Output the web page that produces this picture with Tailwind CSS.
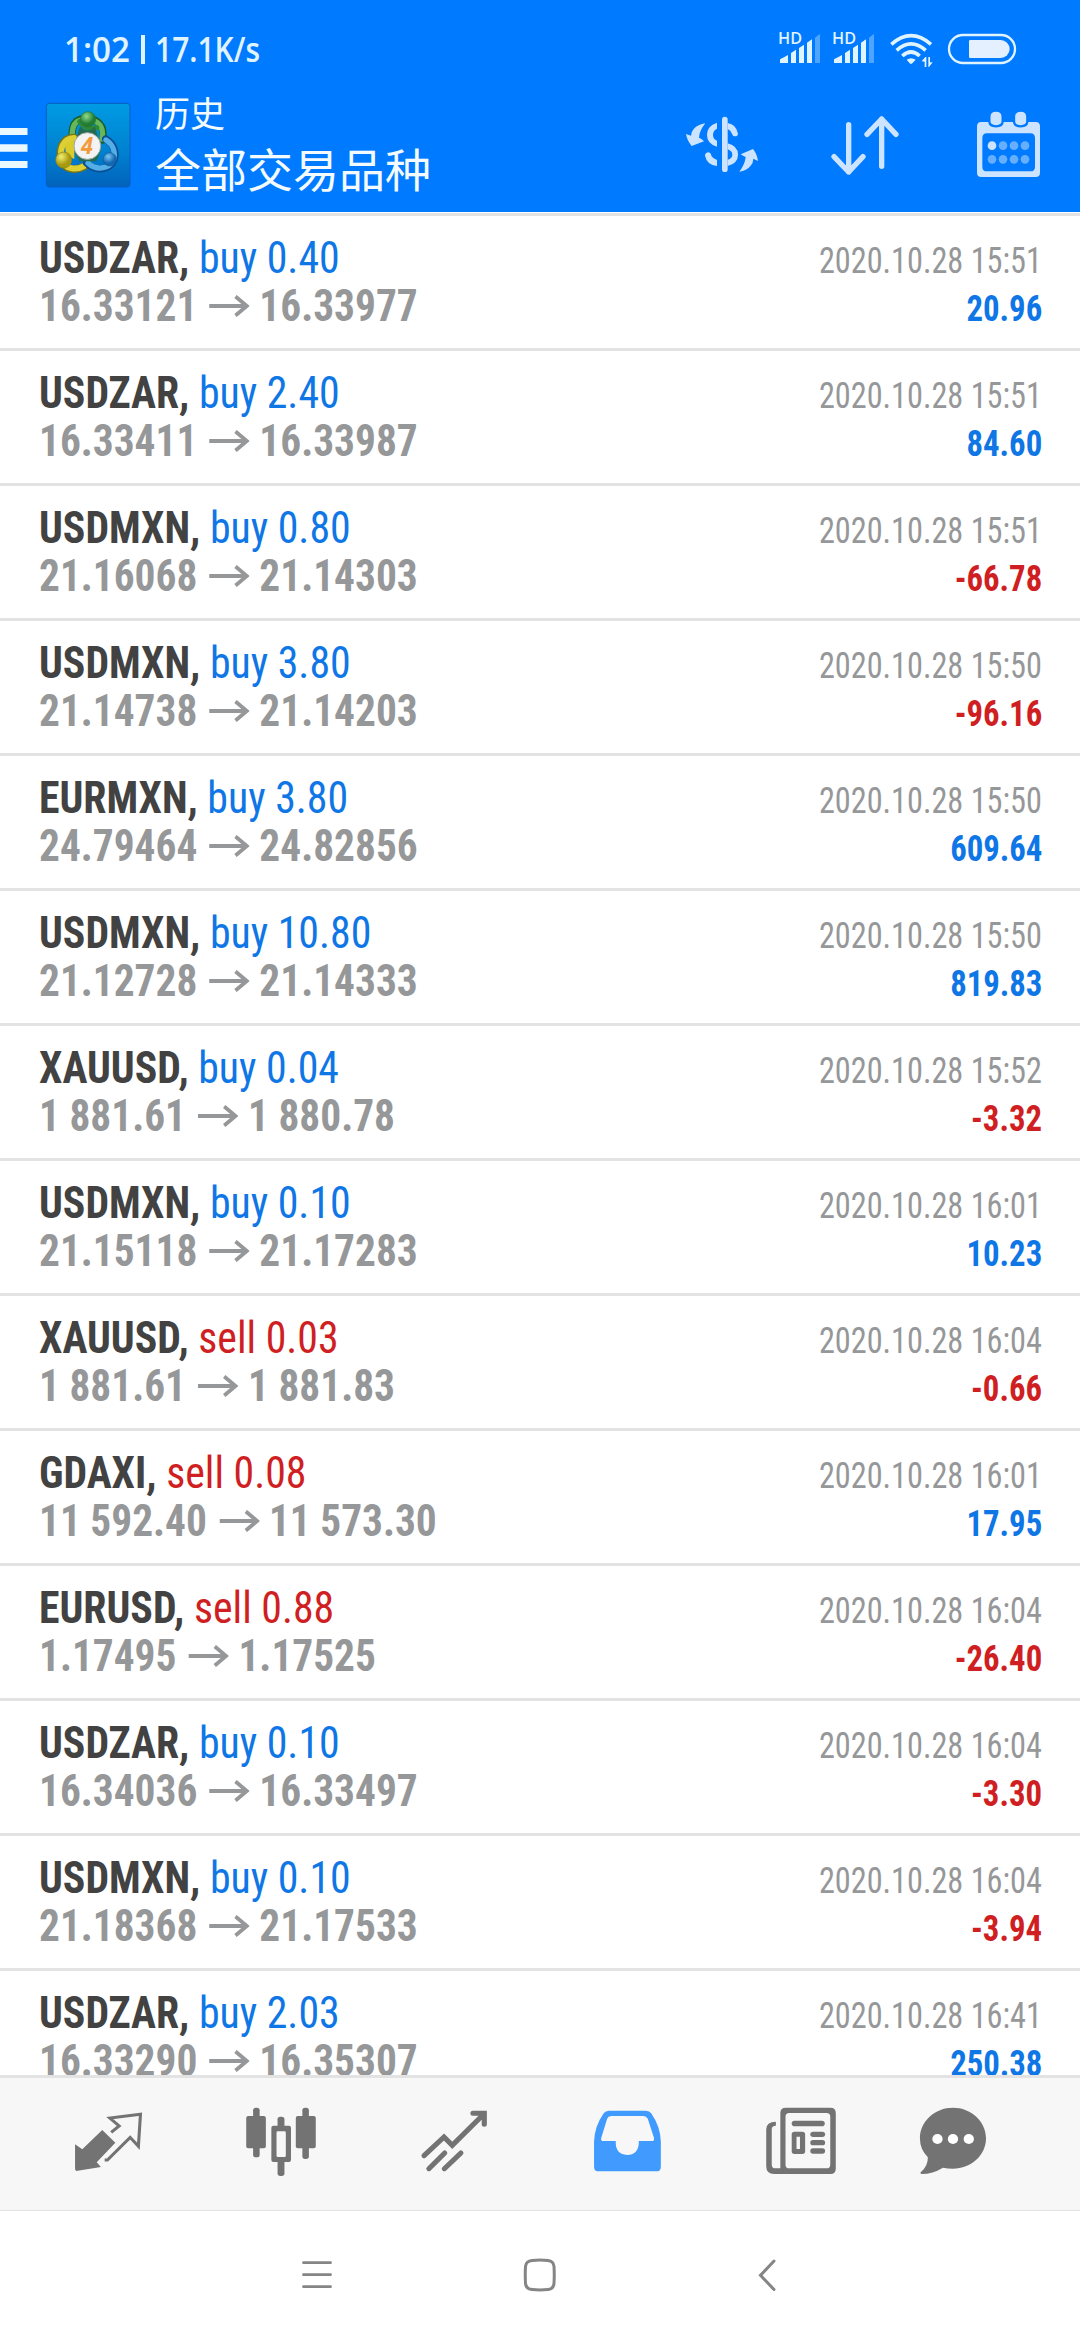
<!DOCTYPE html>
<html lang="zh-CN">
<head>
<meta charset="utf-8">
<title>历史</title>
<script src="https://cdn.jsdelivr.net/npm/@tailwindcss/browser@4"></script>
</head>
<body class="flex h-[2340px] w-[1080px] flex-col overflow-hidden bg-white font-['Roboto_Condensed','Roboto','Noto_Sans_CJK_SC',sans-serif]">

<header class="flex h-[212px] shrink-0 flex-col bg-[#007aff]">
  <!-- Status bar -->
  <div class="flex h-[78px] items-start justify-between pt-[30px] pr-[63px] pl-[64px]">
    <svg class="h-10 w-[200px] overflow-visible" viewBox="0 0 200 40" fill="#e0f4ff" font-family="Open Sans, sans-serif" font-size="34">
      <text x="0" y="31.700" font-weight="600" textLength="66" lengthAdjust="spacingAndGlyphs">1:02</text>
      <rect x="77" y="5" width="4" height="29"/>
      <text x="91" y="31.700" font-weight="600" textLength="105" lengthAdjust="spacingAndGlyphs">17.1K/s</text>
    </svg>
    <svg class="h-10 w-60 overflow-visible" viewBox="351 90 720 120" fill="#e0f4ff">
      <g id="signal">
        <text x="354" y="132" font-family="Open Sans, sans-serif" font-weight="600" font-size="46" textLength="72" lengthAdjust="spacingAndGlyphs">HD</text>
        <path d="M360 189v-11q12-6 24-13v24zM393 189v-30l15-10v40zM417 189v-45l15-10v55zM441 189v-61l15-10v71z"/>
        <path d="M465 189v-76l15-12v88z" opacity=".35"/>
      </g>
      <use href="#signal" x="162"/>
      <g fill="none" stroke="#e0f4ff" stroke-width="11">
        <path d="M694 133Q753 81 813 133"/><path d="M710 151Q753 112 797 151"/><path d="M727 168Q753 144 779 168"/>
      </g>
      <path d="M740 179Q753 170 767 179L757 190Q753 193 749 190zM785 184l11-13h3v30h-5v-16zM805 171h5v16h8l-11 14h-2z"/>
      <rect x="867" y="105" width="198" height="84" rx="42" fill="none" stroke="#e0f4ff" stroke-width="7"/>
      <path d="M931 120h91a27 27 0 0 1 0 54h-91q-4 0-4-4v-46q0-4 4-4z" fill="#e4f0ff"/>
    </svg>
  </div>
  <!-- App bar -->
  <div class="flex h-[134px] items-center pr-[30px]">
    <svg class="mt-[6px] h-10 w-7" viewBox="0 0 28 40" fill="#eaf8ff"><path d="M0 0h27.500v7H0zM0 16.300h27.500v7.500H0zM0 33h27.500v7H0z"/></svg>
    <svg class="ml-[17px] size-[86px]" viewBox="45 39 258 258">
      <defs>
        <linearGradient id="bg" x2="0" y2="1"><stop stop-color="#009be3"/><stop offset=".6" stop-color="#0080cf"/><stop offset="1" stop-color="#0262bb"/></linearGradient>
        <radialGradient id="gr" cx=".4" cy=".3"><stop stop-color="#8fdc8c"/><stop offset="1" stop-color="#207c35"/></radialGradient>
        <radialGradient id="ye" cx=".35" cy=".3"><stop stop-color="#f3ef73"/><stop offset="1" stop-color="#a89a10"/></radialGradient>
        <radialGradient id="bl" cx=".4" cy=".3"><stop stop-color="#7cc8f5"/><stop offset="1" stop-color="#1167b0"/></radialGradient>
      </defs>
      <rect x="49" y="43" width="251" height="251" rx="9" fill="url(#bg)" stroke="#075dc0" stroke-width="3"/>
      <g fill="none" stroke-linecap="round">
        <path d="M127 150C121 90 152 88 173 89C195 89 228 105 217 153" stroke="#185f27" stroke-width="22"/>
        <path d="M127 148C123 92 152 90 173 91C195 92 225 105 216 150" stroke="#66b75c" stroke-width="16"/>
        <path d="M150 98Q173 128 200 116" stroke="#2f8a35" stroke-width="16"/>
        <path d="M132 146C95 148 88 180 92 208C102 247 140 245 162 233" stroke="#7b7412" stroke-width="23"/>
        <path d="M132 147C97 150 90 180 94 208C104 243 140 243 160 232" stroke="#dcd034" stroke-width="18"/>
        <path d="M227 150C252 165 259 190 253 212C238 247 195 247 170 222" stroke="#0a4f94" stroke-width="22"/>
        <path d="M228 153C250 167 257 190 251 212C236 243 197 244 174 222" stroke="#55aee6" stroke-width="16"/>
      </g>
      <path d="M150 112q22 25 45 0l18 70-14 35h-50l-20-35z" fill="#246b50"/>
      <path d="M105 165l28-15v60l-25-10z" fill="#d9cb2b"/>
      <circle cx="174" cy="91" r="23" fill="url(#gr)" stroke="#2a7336" stroke-width="2"/>
      <circle cx="101" cy="213" r="24" fill="url(#ye)" stroke="#8b8117" stroke-width="2"/>
      <circle cx="239" cy="211" r="20" fill="url(#bl)" stroke="#165c9c" stroke-width="2"/>
      <circle cx="172" cy="171" r="40" fill="#f3f3f4" stroke="#a3aaa5" stroke-width="3"/>
      <text x="171" y="194" text-anchor="middle" font-family="Open Sans, sans-serif" font-style="italic" font-weight="700" font-size="68" textLength="36" lengthAdjust="spacingAndGlyphs" fill="#f39a3c">4</text>
    </svg>
    <div class="mt-[6px] ml-6 flex flex-1 flex-col text-[#f3fbff]">
      <span class="text-[35px] leading-[44px]">历史</span>
      <span class="mt-[2px] text-[46px] leading-[62px]">全部交易品种</span>
    </div>
    <div class="flex gap-[59px]">
      <svg class="size-[84px]" viewBox="60 309 252 252" fill="#cce4ff">
        <path d="M136 370Q114 373 101 387Q94 395 93 407L78 402Q81 421 95 438L132 424Q124 415 117 413Q118 392 136 370z"/>
        <path d="M238 515Q260 512 272 497Q280 488 280 476L294 483Q291 462 279 447L242 463Q249 468 257 471Q255 493 238 515z"/>
        <rect x="186" y="350" width="17" height="166" rx="8.500"/>
        <path d="M171 368v18q-12 5-12 19q0 13 12 17v18q-30-8-30-35t30-37zM203 369q26 4 31 32q-1 8-9 8q-7 0-9-8q-4-10-13-14zM203 430q31 8 31 34t-31 34v-19q14-4 14-15t-14-16zM144 457q8 0 10 10q5 9 17 13v18q-30-3-36-31q0-8 9-10z"/>
      </svg>
      <svg class="size-[84px]" viewBox="489 309 252 252" fill="none" stroke="#cce4ff" stroke-width="16" stroke-linecap="round" stroke-linejoin="round">
        <path d="M566 374V516M522 470L566 516L609 470M665 499V357M621 403L665 357L708 403"/>
      </svg>
      <svg class="size-[84px]" viewBox="918 309 252 252" fill="#cce4ff">
        <path fill-rule="evenodd" d="M964 366H1127q13 0 13 13V518q0 13-13 13H964q-13 0-13-13V379q0-13 13-13zM981 400q-14 0-14 14V500q0 14 14 14H1111q14 0 14-14V414q0-14-14-14z"/>
        <g stroke="#007aff" stroke-width="7"><path d="M988 350q0-18 20-18t20 18v14q0 15-20 15t-20-15zM1062 350q0-18 20-18t20 18v14q0 15-20 15t-20-15z"/></g>
        <circle cx="996" cy="437" r="13"/>
        <g fill="#66afff"><circle cx="1029" cy="437" r="13"/><circle cx="1062" cy="437" r="13"/><circle cx="1095" cy="437" r="13"/><circle cx="996" cy="478" r="13"/><circle cx="1029" cy="478" r="13"/><circle cx="1062" cy="478" r="13"/><circle cx="1095" cy="478" r="13"/></g>
      </svg>
    </div>
  </div>
</header>

<main id="deals" class="mt-px h-[1862px] shrink-0 overflow-hidden border-t-[3px] border-[#e3e3e3]"></main>

<!-- Tab bar -->
<nav class="flex h-[136px] shrink-0 items-start border-t-[3px] border-b border-[#e3e3e3] bg-[#f7f7f7] pt-[20px] pl-[67px] text-[#737373]">
  <svg class="size-[84px]" viewBox="194.6 114 244 252" preserveAspectRatio="none" fill="currentColor">
    <path d="M297 210L335 248L281 307L293 321L221 333Q218 330 218 325V253L239 268z"/>
    <path d="M323 217L346 198L319 174L408 163L402 259L378 232L312 300H304" fill="none" stroke="currentColor" stroke-width="9"/>
  </svg>
  <svg class="ml-[88px] size-[84px]" viewBox="694 114 244 252" preserveAspectRatio="none" fill="currentColor">
    <rect x="735" y="143" width="19" height="149" rx="8"/><rect x="715" y="168" width="57" height="97" rx="6"/>
    <rect x="878" y="143" width="19" height="154" rx="8"/><rect x="859" y="168" width="58" height="97" rx="6"/>
    <rect x="806" y="170" width="20" height="178" rx="8"/><rect x="788" y="197" width="57" height="109" rx="6"/>
    <rect x="803" y="214" width="27" height="77" rx="4" fill="#f7f7f7"/>
  </svg>
  <svg class="ml-[89px] size-[84px]" viewBox="1196 114 244 252" preserveAspectRatio="none" fill="none" stroke="currentColor" stroke-width="15" stroke-linecap="round">
    <path d="M1231 287L1289 231L1313 256L1404 163M1373 160H1406V193M1245 326L1291 279M1290 326L1338 279"/>
  </svg>
  <svg class="ml-[89px] size-[84px]" viewBox="130.700 114 244 252" preserveAspectRatio="none">
    <path d="M200 152H308Q318 152 323 160Q350 200 351 245V320Q351 334 338 334H170Q157 334 157 320V245Q158 200 185 160Q190 152 200 152z" fill="#419bff"/>
    <path d="M207 168H300Q309 168 313 176L331 233Q333 243 325 243H287V250Q285 285 253 285Q221 283 220 250V243H184Q175 243 178 233L195 176Q198 168 207 168z" fill="#f7f7f7"/>
  </svg>
  <svg class="ml-[90px] size-[84px]" viewBox="636 114 244 252" preserveAspectRatio="none" fill="currentColor">
    <path fill-rule="evenodd" d="M714 143H843q16 0 16 16V326q0 16-16 16H680q-23 0-23-23V208q0-23 28-23v12q-12 0-12 11V314q0 11 11 11h14V159q0-16 16-16zM724 159q-11 0-11 11V314q0 11 11 11H832q11 0 11-11V170q0-11-11-11z"/>
    <rect x="731" y="182" width="96" height="17" rx="8.500"/><rect x="785" y="215" width="43" height="16" rx="8"/><rect x="785" y="240" width="43" height="16" rx="8"/><rect x="785" y="265" width="43" height="16" rx="8"/>
    <path fill-rule="evenodd" d="M739 215h23q8 0 8 8v51q0 8-8 8h-23q-8 0-8-8v-51q0-8 8-8zM745 230v37h10v-37z"/>
  </svg>
  <svg class="ml-[69px] size-[84px]" viewBox="1080 114 244 252" preserveAspectRatio="none" fill="currentColor">
    <path d="M1199 143C1252 143 1295 184 1295 235C1295 286 1252 326 1199 326Q1184 326 1170 323Q1140 342 1108 342Q1102 340 1106 336Q1127 318 1126 292Q1103 268 1103 235C1103 184 1146 143 1199 143z"/>
    <g fill="#fff"><circle cx="1154" cy="237" r="15"/><circle cx="1199" cy="237" r="15"/><circle cx="1245" cy="237" r="15"/></g>
  </svg>
</nav>

<!-- System navigation -->
<footer class="flex h-[129px] shrink-0 items-start pt-[40px] pl-[297px] text-[#858585]">
  <svg class="h-12 w-10" viewBox="0 0 40 48" fill="none" stroke="currentColor" stroke-width="2.800" stroke-linecap="round"><path d="M6.500 11.700h27M6.500 23.700h27M6.500 35.700h27"/></svg>
  <svg class="ml-[183px] h-12 w-10" viewBox="0 0 40 48" fill="none" stroke="currentColor" stroke-width="3"><path d="M12 9.500Q20 8.700 28 9.500Q33.500 10 34 15.500Q34.500 24 34 32.500Q33.500 38 28 38.500Q20 39.300 12 38.500Q6 38 5.500 32.500Q5 24 5.500 15.500Q6 10 12 9.500z"/></svg>
  <svg class="ml-[187px] h-12 w-10" viewBox="0 0 40 48" fill="none" stroke="currentColor" stroke-width="3" stroke-linecap="round"><path d="M27 10L13.500 24.300L27 38.500"/></svg>
</footer>

<script>
const deals = [
  ["USDZAR", "buy 0.40", "16.33121", "16.33977", "15:51", "20.96"],
  ["USDZAR", "buy 2.40", "16.33411", "16.33987", "15:51", "84.60"],
  ["USDMXN", "buy 0.80", "21.16068", "21.14303", "15:51", "-66.78"],
  ["USDMXN", "buy 3.80", "21.14738", "21.14203", "15:50", "-96.16"],
  ["EURMXN", "buy 3.80", "24.79464", "24.82856", "15:50", "609.64"],
  ["USDMXN", "buy 10.80", "21.12728", "21.14333", "15:50", "819.83"],
  ["XAUUSD", "buy 0.04", "1 881.61", "1 880.78", "15:52", "-3.32"],
  ["USDMXN", "buy 0.10", "21.15118", "21.17283", "16:01", "10.23"],
  ["XAUUSD", "sell 0.03", "1 881.61", "1 881.83", "16:04", "-0.66"],
  ["GDAXI", "sell 0.08", "11 592.40", "11 573.30", "16:01", "17.95"],
  ["EURUSD", "sell 0.88", "1.17495", "1.17525", "16:04", "-26.40"],
  ["USDZAR", "buy 0.10", "16.34036", "16.33497", "16:04", "-3.30"],
  ["USDMXN", "buy 0.10", "21.18368", "21.17533", "16:04", "-3.94"],
  ["USDZAR", "buy 2.03", "16.33290", "16.35307", "16:41", "250.38"],
];
const blue = "text-[#0f76e6]", red = "text-[#cf1f22]";
document.getElementById("deals").innerHTML = deals.map(([symbol, side, open, close, time, profit]) => `
  <section class="flex h-[135px] justify-between border-b-[3px] border-[#e3e3e3] pr-[38px] pl-[39px] whitespace-nowrap">
    <div class="flex flex-col pt-[18px] text-[44px] leading-[48px] font-stretch-condensed">
      <div class="origin-left scale-x-[0.95]"><span class="font-bold text-[#424242]">${symbol},</span> <span class="${side[0] === "b" ? blue : red}">${side}</span></div>
      <div class="flex origin-left scale-x-[0.94] items-center font-bold text-[#969799]"><span>${open}</span>
        <svg class="mr-[10px] ml-[13px] h-[22px] w-[43px]" viewBox="0 0 43 22" fill="none" stroke="currentColor" stroke-width="4"><path d="M0 11H40M28 1.500L40 11L28 20.500"/></svg>
        <span>${close}</span></div>
    </div>
    <div class="flex flex-col items-end pt-[21px] text-[36px] leading-[48px] font-stretch-condensed">
      <span class="origin-right scale-x-[0.896] text-[#969799]">2020.10.28 ${time}</span>
      <span class="origin-right scale-x-[0.91] font-bold ${profit[0] === "-" ? red : blue}">${profit}</span>
    </div>
  </section>`).join("");
</script>
</body>
</html>
